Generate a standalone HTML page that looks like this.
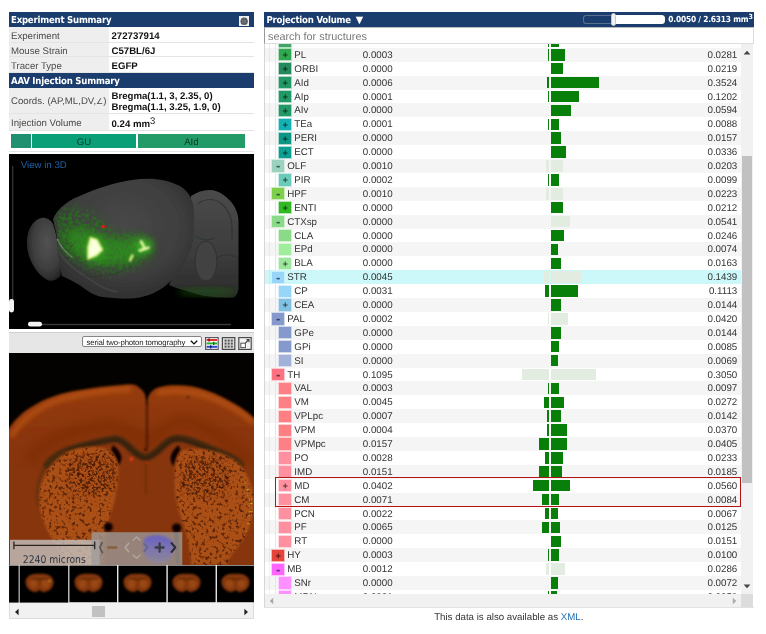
<!DOCTYPE html>
<html><head><meta charset="utf-8"><title>Projection Volume</title>
<style>
*{box-sizing:border-box;margin:0;padding:0}
html,body{width:766px;height:634px;background:#fff;overflow:hidden}
body{font-family:"Liberation Sans",Arial,sans-serif;font-size:9.65px;color:#333;position:relative;will-change:transform;text-rendering:geometricPrecision}
.abs{position:absolute}
.hd{position:absolute;background:#1a3d6d;color:#fff;font-family:"DejaVu Sans Condensed","DejaVu Sans",sans-serif;font-stretch:condensed;font-weight:bold;font-size:9.5px;letter-spacing:-0.2px;height:15.2px;line-height:17px;padding-left:2.5px;white-space:nowrap;overflow:hidden}
.lr{position:absolute;left:8.5px;width:245px;background:#fff;border-bottom:1px solid #e4e4e4}
.lr .k{position:absolute;left:0;top:0;bottom:0;width:100px;background:#eee;color:#4a4a4a;padding-left:2.5px;padding-top:2px}
.lr .v{position:absolute;left:103px;top:2px;font-weight:bold;color:#111;white-space:nowrap}
/* tree */
#tree{position:absolute;left:264px;top:44.4px;width:477.4px;height:549.9px;overflow:hidden;background:#fff}
.r{position:absolute;left:0;width:100%;height:13.9px;line-height:13.9px;white-space:nowrap}
.sq{position:absolute;top:1.4px;width:12.1px;height:11.2px;display:block;font-style:normal}
.gd{position:absolute;left:11.2px;top:0;width:1px;height:13.9px;background:#e6e6e6;display:block}
.pm{position:absolute;left:0;top:0;width:12.1px;height:11.2px;line-height:12.6px;text-align:center;font-size:9.4px;color:rgba(0,0,0,.68);font-weight:bold}
.mn{font-weight:bold;font-size:13px;line-height:11.6px;color:rgba(10,30,50,.7)}
.nm{position:absolute;top:1px;color:#333;font-size:9.75px}
.v1{position:absolute;left:98.8px;top:1px;color:#333;font-size:9.75px}
.v2{position:absolute;right:4.1px;top:1px;color:#333;font-size:9.75px}
.bl{position:absolute;right:192.4px;top:1.2px;height:11.5px;display:block}
.br{position:absolute;left:287px;top:1.2px;height:11.5px;display:block}
.g{background:#087f08}
.f{background:#e2ece0}
</style></head><body>

<!-- LEFT PANEL -->
<div class="hd" style="left:8.5px;top:11.8px;width:245px">Experiment Summary</div>
<div class="abs" style="left:239.4px;top:15.7px;width:10.1px;height:10.1px;background:#f0f0f0"><svg class="abs" style="left:0;top:0" width="10.1" height="10.1" viewBox="0 0 20 20"><ellipse cx="10.2" cy="10.4" rx="7.2" ry="7.6" fill="#50545c"/><path d="M10.2 3.5v13.5M6.4 7q2.6 3.4 0 6.8M14 7q-2.6 3.4 0 6.8" stroke="#8a8e96" stroke-width="1.3" fill="none"/></svg></div>
<div class="lr" style="top:27px;height:15.6px;line-height:15.2px"><div class="k">Experiment</div><div class="v">272737914</div></div>
<div class="lr" style="top:42.6px;height:14.6px;line-height:14.4px"><div class="k">Mouse Strain</div><div class="v">C57BL/6J</div></div>
<div class="lr" style="top:57.2px;height:15.8px;line-height:15.4px"><div class="k">Tracer Type</div><div class="v">EGFP</div></div>
<div class="hd" style="left:8.5px;top:73px;width:245px">AAV Injection Summary</div>
<div class="lr" style="top:88.2px;height:25.6px;line-height:25px"><div class="k" style="padding-top:1px">Coords. (AP,ML,DV,<span style="font-size:8px">∠</span>)</div><div class="v" style="line-height:10.6px;top:4.2px">Bregma(1.1, 3, 2.35, 0)<br>Bregma(1.1, 3.25, 1.9, 0)</div></div>
<div class="lr" style="top:113.8px;height:17.2px;line-height:18px"><div class="k" style="padding-top:1px">Injection Volume</div><div class="v">0.24 mm<sup style="font-weight:normal;font-size:9.5px;line-height:0;vertical-align:3.4px">3</sup></div></div>
<div class="abs" style="left:8.5px;top:131px;width:245px;height:21px;background:#fff;border-bottom:1px solid #e4e4e4"></div>
<div class="abs" style="left:11.2px;top:133.8px;width:19.7px;height:14.6px;background:#1f9070"></div>
<div class="abs" style="left:31.6px;top:133.8px;width:104.8px;height:14.6px;background:#0b9f77;color:#033a2a;text-align:center;line-height:17px;overflow:hidden">GU</div>
<div class="abs" style="left:137.6px;top:133.8px;width:107.6px;height:14.6px;background:#239b68;color:#063a22;text-align:center;line-height:17px;overflow:hidden">AId</div>

<!-- 3D brain -->
<div class="abs" style="left:8.5px;top:154.3px;width:245px;height:174.3px;background:#000;overflow:hidden">
<svg class="abs" style="left:0;top:0" width="245" height="174.3" viewBox="0 0 245 174.3">
<defs>
<filter id="b1" x="-20%" y="-20%" width="140%" height="140%"><feGaussianBlur stdDeviation="1.2"/></filter>
<filter id="b3" x="-30%" y="-30%" width="160%" height="160%"><feGaussianBlur stdDeviation="3.5"/></filter>
<filter id="b6" x="-30%" y="-30%" width="160%" height="160%"><feGaussianBlur stdDeviation="6"/></filter>
<filter id="b05" x="-20%" y="-20%" width="140%" height="140%"><feGaussianBlur stdDeviation="0.7"/></filter>
<radialGradient id="cg" cx="0.5" cy="0.4" r="0.65"><stop offset="0" stop-color="#484848"/><stop offset="0.6" stop-color="#3f3f3f"/><stop offset="1" stop-color="#2c2c2c"/></radialGradient>
<radialGradient id="og" cx="0.6" cy="0.4" r="0.7"><stop offset="0" stop-color="#525252"/><stop offset="0.6" stop-color="#3e3e3e"/><stop offset="1" stop-color="#1c1c1c"/></radialGradient>
<linearGradient id="cbg" x1="0" y1="0" x2="0" y2="1"><stop offset="0" stop-color="#4a4a4a"/><stop offset="0.6" stop-color="#3c3c3c"/><stop offset="1" stop-color="#2a2a2a"/></linearGradient>
<clipPath id="cc"><path id="cer" d="M44 65 C50 52 62 45 73 41 C88 34 108 28 123 26 C140 23 158 25 171 32 C181 38 185 48 185 60 C186 80 184 95 179 102 C173 116 163 128 152 135 C143 141 132 144 122 144.5 C112 145 104 144 98 143.5 C90 143 82 140 76 135 C68 129 60 125 53 122 C50 112 49 98 48 84 C47 76 45 70 44 65Z"/></clipPath>
<filter id="gn2" color-interpolation-filters="sRGB" x="-20%" y="-20%" width="140%" height="140%"><feGaussianBlur in="SourceGraphic" stdDeviation="4" result="bl"/><feTurbulence type="fractalNoise" baseFrequency="0.3" numOctaves="3" seed="19" result="n"/><feColorMatrix in="n" type="matrix" values="0 0 0 0 0  0 0 0 0 0  0 0 0 0 0  2.6 0 0 0 -0.95" result="na"/><feComposite in="bl" in2="na" operator="in"/></filter>
<filter id="gn" color-interpolation-filters="sRGB" x="-20%" y="-20%" width="140%" height="140%"><feGaussianBlur in="SourceGraphic" stdDeviation="5" result="bl"/><feTurbulence type="fractalNoise" baseFrequency="0.35" numOctaves="3" seed="7" result="n"/><feColorMatrix in="n" type="matrix" values="0 0 0 0 0  0 0 0 0 0  0 0 0 0 0  2.2 0 0 0 -0.45" result="na"/><feComposite in="bl" in2="na" operator="in"/></filter>
</defs>
<g filter="url(#b05)">
<!-- cerebellum + brainstem -->
<path d="M182 42 C188 38 194 36 200 36 C206 36 210 38 213 40 C219 44 225 50 227 56 C229 60 229.5 64 229.5 70 L229.5 134 C229 139 227 143 224 143.6 C216 144 208 143.5 202 142.8 C192 141.5 184 139 178 137 C170 135 164 133 160 131 L175 100Z" fill="url(#cbg)"/>
<path d="M189 50 C196 44 206 44 213 50 C220 56 223 64 223 74 L223 86" fill="none" stroke="#353535" stroke-width="1.2"/>
<ellipse cx="197" cy="107" rx="11" ry="20" fill="#424242" stroke="#303030" stroke-width="1"/>
<path d="M208 104 C214 100 222 100 229 104" fill="none" stroke="#303030" stroke-width="1"/>
<path d="M186 82 C192 86 200 87 206 84" fill="none" stroke="#2e3a2e" stroke-width="1.2"/>
<!-- olfactory bulb -->
<path d="M32 64 C37 63 42 66 44 70 C47 78 49 90 50 100 C51 110 52 118 51.5 122 C48 126 43 127.5 40 126.5 C32 124 24 114 20 102 C17 92 17 82 21 74 C24 68 28 65 32 64Z" fill="url(#og)"/>
<!-- cerebrum -->
<use href="#cer" fill="url(#cg)"/>
<path d="M50 98 C56 108 66 116 76 122 C86 130 96 136 108 138" fill="none" stroke="#555" stroke-width="1.6" opacity=".45"/>
<path d="M48.5 85 C51 92 56 98 63.5 103.5" fill="none" stroke="#9a9a9a" stroke-width="1.5" opacity=".85"/>
<path d="M76 122 C92 124 110 120 124 112" fill="none" stroke="#333" stroke-width="1.2" opacity=".7"/>
</g>
<!-- green signal -->
<g clip-path="url(#cc)">
<g filter="url(#gn2)">
<path d="M45 60 C52 51 62 52 72 55 C82 58 93 63 98 71 C100 77 105 79 113 79 C125 78 136 80 144 87 C148 94 144 103 136 107 C128 113 114 119 100 119 C88 119 78 114 68 108 C58 104 50 96 47 86 C44 78 44 68 45 60Z" fill="#247417"/>
</g>
<g filter="url(#gn)">
<path d="M52 76 C60 70 72 72 82 76 C92 80 100 84 112 84 C124 82 136 82 142 88 C146 96 140 104 130 106 C118 112 104 114 92 112 C78 110 66 104 58 96 C52 90 50 82 52 76Z" fill="#287e18"/>
</g>
<g filter="url(#b3)">
<path d="M62 80 C70 74 82 76 92 82 C100 88 112 88 122 86 C130 82 140 84 142 92 C142 100 132 104 122 106 C108 110 94 110 84 108 C72 104 62 94 62 80Z" fill="#2f9420" opacity=".5"/>
<ellipse cx="135" cy="92" rx="8" ry="7" fill="#40c422" opacity=".62"/>
<ellipse cx="86" cy="95" rx="9" ry="11" fill="#40c422" opacity=".5"/>
</g>
</g>
<g filter="url(#b3)"><ellipse cx="198" cy="138" rx="30" ry="3.5" fill="#1a5a12" opacity=".7"/></g>
<g filter="url(#b1)">
<path d="M81.4 83.5 L88 85.5 L93.6 95.8 L87.3 101.7 L78.9 105.3 L78.9 93Z" fill="#faffdc" stroke="#d2f060" stroke-width="1.4"/>
<path d="M132 87.3 L134.9 92.6 M130.8 96.6 L139.4 93.7" fill="none" stroke="#f2ffae" stroke-width="2.6" stroke-linecap="round"/>
<path d="M123.4 101.4 L121 106.4" fill="none" stroke="#e8ff80" stroke-width="2.4" stroke-linecap="round"/>
</g>
<circle cx="94.2" cy="72.6" r="1.7" fill="#f01414" filter="url(#b05)"/><rect x="95" y="72.2" width="4" height="0.9" fill="#c01010" opacity=".8"/>
<!-- sliders -->
<rect x="3" y="12" width="1.3" height="146" fill="#333"/>
<rect x="0" y="145" width="5" height="13.5" rx="2.4" fill="#f2f2f2"/>
<rect x="30" y="169.8" width="192" height="1.4" fill="#3a3a3a"/>
<rect x="19" y="167.8" width="14" height="4.8" rx="2.4" fill="#f4f4f4"/>
</svg>

<div class="abs" style="left:12.2px;top:5.5px;color:#1b62a5;font-size:9.7px">View in 3D</div>
</div>

<!-- section viewer -->
<div class="abs" style="left:8.5px;top:332.3px;width:245px;height:20.6px;background:#e6e6e6;border-top:1px solid #d0d0d0"></div>
<div class="abs" style="left:82.3px;top:336.4px;width:119.3px;height:11px;background:#fff;border:1px solid #858585;border-radius:2px;font-size:7.8px;letter-spacing:-0.14px;line-height:11.6px;padding-left:3.2px;color:#1a1a1a;white-space:nowrap">serial two-photon tomography<svg class="abs" style="right:2.2px;top:2.6px" width="8" height="5" viewBox="0 0 8 5"><path d="M.8.8L4 3.9 7.2.8" fill="none" stroke="#111" stroke-width="1.4"/></svg></div>
<svg class="abs" style="left:204.6px;top:336.8px" width="47" height="13" viewBox="0 0 47 13">
<rect x="0.6" y="0.6" width="12.6" height="11.8" fill="#fff" stroke="#5a5a66" stroke-width="1.2"/>
<rect x="1.6" y="2" width="10.6" height="2" fill="#e03030"/><rect x="1.6" y="5.4" width="10.6" height="2" fill="#28b030"/><rect x="1.6" y="8.8" width="10.6" height="2" fill="#2848d0"/>
<rect x="3.4" y="1.4" width="1.4" height="3.2" fill="#8a1010"/><rect x="8" y="4.8" width="1.4" height="3.2" fill="#0a6a10"/><rect x="5" y="8.2" width="1.4" height="3.2" fill="#102080"/>
<rect x="17.4" y="0.6" width="12.4" height="11.8" fill="#dcdcdc" stroke="#4a4a4a" stroke-width="1.2"/>
<g fill="#555"><rect x="19.6" y="2.6" width="2" height="2"/><rect x="22.7" y="2.6" width="2" height="2"/><rect x="25.8" y="2.6" width="2" height="2"/><rect x="19.6" y="5.6" width="2" height="2"/><rect x="22.7" y="5.6" width="2" height="2"/><rect x="25.8" y="5.6" width="2" height="2"/><rect x="19.6" y="8.6" width="2" height="2"/><rect x="22.7" y="8.6" width="2" height="2"/><rect x="25.8" y="8.6" width="2" height="2"/></g>
<rect x="33.8" y="0.6" width="12.4" height="11.8" fill="#f4f4f4" stroke="#4a4a4a" stroke-width="1.2"/>
<rect x="35.8" y="6.2" width="4.6" height="4.4" fill="#fff" stroke="#555" stroke-width="1"/>
<path d="M40.4 6 L43.8 2.8 M41.4 2.6 L44 2.6 L44 5.2" stroke="#444" stroke-width="1.1" fill="none"/>
</svg>

<div class="abs" style="left:8.5px;top:352.9px;width:245px;height:212px;background:#000;overflow:hidden">
<svg class="abs" style="left:0;top:0" width="245" height="212" viewBox="0 0 245 212">
<defs>
<filter id="s1" x="-10%" y="-10%" width="120%" height="120%"><feGaussianBlur stdDeviation="0.8"/></filter>
<filter id="s05" x="-5%" y="-5%" width="110%" height="110%"><feGaussianBlur stdDeviation="0.45"/></filter>
<filter id="s2" x="-20%" y="-20%" width="140%" height="140%"><feGaussianBlur stdDeviation="2.2"/></filter>
<filter id="s4" x="-20%" y="-20%" width="140%" height="140%"><feGaussianBlur stdDeviation="4.5"/></filter>
<filter id="spk" color-interpolation-filters="sRGB" x="0" y="0" width="100%" height="100%"><feTurbulence type="fractalNoise" baseFrequency="0.3" numOctaves="2" seed="3" result="n"/><feColorMatrix in="n" type="matrix" values="0 0 0 0 0.2  0 0 0 0 0.05  0 0 0 0 0  6 0 0 0 -3.25" result="na"/><feComposite in="na" in2="SourceGraphic" operator="in"/></filter>
<filter id="spk2" color-interpolation-filters="sRGB" x="0" y="0" width="100%" height="100%"><feTurbulence type="fractalNoise" baseFrequency="0.38" numOctaves="2" seed="21" result="n"/><feColorMatrix in="n" type="matrix" values="0 0 0 0 0.16  0 0 0 0 0.04  0 0 0 0 0  6 0 0 0 -2.9" result="na"/><feGaussianBlur in="SourceGraphic" stdDeviation="5" result="m"/><feComposite in="na" in2="m" operator="in"/></filter>
<filter id="grn" color-interpolation-filters="sRGB" x="0" y="0" width="100%" height="100%"><feTurbulence type="fractalNoise" baseFrequency="0.5" numOctaves="2" seed="11" result="n"/><feColorMatrix in="n" type="matrix" values="0 0 0 0 0.75  0 0 0 0 0.72  0 0 0 0 0.1  3 0 0 0 -1.5" result="na"/><feComposite in="na" in2="SourceGraphic" operator="in"/></filter>
<linearGradient id="tg" x1="0" y1="0" x2="0" y2="1"><stop offset="0" stop-color="#963c09"/><stop offset="0.35" stop-color="#883407"/><stop offset="1" stop-color="#863407"/></linearGradient>
<path id="lst" d="M73 94.5 C84 93 96 94 101 98 C108 104 110.5 112 109.5 122 C108.5 140 104 156 99 169 C96 180 95 196 96 212 L58 212 C54 200 48 192 42 184 C34 172 29 156 30.5 140 C32 124 42 108 58 99 C63 96.5 68 95 73 94.5Z"/>
<path id="rst" d="M172 98 C180 95 192 95 202 97.5 C212 100 222 104 229 110 C237 117 242.5 128 244.5 142 C245.5 156 243 170 237 182 C231 192 224 200 220 206 L218 212 L182 212 C181 200 179 188 176 176 C170 162 165.5 146 165.5 130 C165.5 116 167 104 172 98Z"/>
<linearGradient id="blg" x1="0" y1="0" x2="0" y2="1"><stop offset="0" stop-color="#4a4af0"/><stop offset="0.45" stop-color="#6a6ad8"/><stop offset="1" stop-color="#8a8aa8"/></linearGradient>
</defs>
<rect width="245" height="212" fill="#030201"/>
<g filter="url(#s1)">
<path id="tis" d="M-2 214 L-2 78 C2 72 6 67 9.7 63.8 C14 59 19 56 23.3 53.6 C29 50 35 47 40.4 45.1 C47 42.5 54 40.5 60.8 39.1 C68 37.5 75 36.5 81.3 35.7 C88 34.6 95 33.8 101.7 33.2 C109 32.4 116 31.8 122.5 31.5 C126 31.6 128 32.6 129.3 34 C132 36 134 38 135.3 40 C136.5 42 137 46 137.3 52 L138.3 52 C138.3 48 138.6 45 139.5 43.4 C141 40 143 37.5 146.4 35.7 C152 33.4 158 32.6 163.4 32.3 C170 32 176 32.4 182.1 33.2 C188 34.3 194 36 199.2 38.3 C206 40.6 212 43.5 217.9 46.8 C224 50 230 53.5 235 57 C239 60 243 63 247 67 L247 214Z" fill="url(#tg)"/>
</g>
<!-- cortex inner shading -->
<g filter="url(#s4)" opacity=".55">
<path d="M20 110 C30 90 60 76 100 72 C112 72 124 80 137 90 C150 78 166 66 176 68 C196 70 222 88 240 112" fill="none" stroke="#7a2c04" stroke-width="14"/>
</g>
<!-- bright outer rim -->
<g filter="url(#s2)" opacity=".6">
<path d="M2 84 C12 66 30 54 52 46 C74 40 100 37 122 36" fill="none" stroke="#c25a14" stroke-width="6"/>
<path d="M148 40 C166 36 190 38 210 48 C224 54 236 62 245 70" fill="none" stroke="#c25a14" stroke-width="6"/>
</g>
<!-- corpus callosum / external capsule -->
<g filter="url(#s1)" fill="none" stroke-linecap="round" stroke-linejoin="round">
<path d="M30 152 C27 136 30 122 38 112" stroke="#5a300e" stroke-width="3.2" opacity=".75"/>
<path d="M231 112 C238 122 242 136 243 150" stroke="#5a300e" stroke-width="3" opacity=".6"/>
<path d="M38 112 C44 104 54 98.5 66 95 C80 91 94 87.5 106 86 C111 86 115 89 119 93 C125 99 130 103.5 136.5 104.5 C143 103.5 148 99 154 93 C158 89 162 86 167 85.5 C174 85 182 87.5 190 91 C200 95.5 210 99 219 103 C224 105.5 228 108 231 112" stroke="#4a2a10" stroke-width="7.6"/>
<path d="M60 97 C76 92 94 88 106 86.5 C111 86.5 115 89.5 119 93.5 C125 99.5 130 104 136.5 105 C143 104 148 99.5 154 93.5 C158 89.5 162 86.5 167 86 C176 86 190 91.5 206 98" stroke="#33200e" stroke-width="3.4" opacity=".8"/>
</g>
<g filter="url(#s1)">
<path d="M104 92 C108 95 111.5 99 112.5 104 C112.5 108 111 111 109 112 C107.5 106 105.5 101 102 97Z" fill="#0e0602"/>
<path d="M169.5 92 C166 95 162.5 99 161.5 104 C161.5 108 162.5 111.5 164.5 113 C166 107 168 102 171.5 97Z" fill="#0e0602"/>
<circle cx="136.6" cy="96.5" r="1.3" fill="#1a0a02"/>
</g>
<!-- striatum -->
<g filter="url(#s1)"><use href="#lst" fill="#aa4f16"/><use href="#rst" fill="#aa4f16"/></g>
<g opacity=".6" filter="url(#s05)"><use href="#lst" filter="url(#spk)"/><use href="#rst" filter="url(#spk)"/></g>
<g opacity=".65" filter="url(#s05)"><ellipse cx="82" cy="122" rx="26" ry="22" fill="#fff" filter="url(#spk2)"/><ellipse cx="196" cy="124" rx="26" ry="22" fill="#fff" filter="url(#spk2)"/></g>
<path d="M232 126 C238 128 243 138 244 152 C244 164 241 174 236 182 C240 168 241 152 238 140Z" filter="url(#grn)" fill="#fff"/>
<!-- fissure + septum -->
<g filter="url(#s1)">
<path d="M137.8 50 L137.8 96" stroke="#3a1604" stroke-width="1.6" fill="none"/>
<path d="M137 108 L137 142" stroke="#6a2a06" stroke-width="2.4" fill="none" opacity=".7"/>
<circle cx="99.2" cy="174" r="4.6" fill="#0a0502"/>
<circle cx="167.6" cy="175" r="4.6" fill="#0a0502"/>
<path d="M167 180 L169 212" stroke="#1a0a02" stroke-width="3" opacity=".8"/>
<circle cx="122.4" cy="106" r="1.7" fill="#ff3a24"/>
<circle cx="137.8" cy="109.5" r="0.9" fill="#d83020"/>
<circle cx="179" cy="44" r="1.1" fill="#2a0c02"/>
</g>
<!-- overlays -->
<rect x="1" y="186.8" width="89.6" height="25.2" fill="#c6c6c6" opacity=".78"/>
<rect x="82.5" y="179.2" width="90.8" height="32.8" fill="#9c9c9c" opacity=".76"/>
<path d="M136 185 C144 180 158 182 163 188 C167 194 164 204 158 209 C150 212 140 210 137 204 C134 198 133 190 136 185Z" fill="url(#blg)" opacity=".6" filter="url(#s1)"/>
<path d="M4.6 192.3 L86 192.3 M4.9 188.6 L4.9 196.2 M85.7 188.6 L85.7 196.2" stroke="#2a2420" stroke-width="1.3" fill="none"/>
<text x="13.8" y="210.3" font-family="'DejaVu Sans Condensed','DejaVu Sans',sans-serif" font-stretch="condensed" font-size="10.6" fill="#2c3444" textLength="63" lengthAdjust="spacingAndGlyphs">2240 microns</text>
<g fill="none" stroke-linecap="round" stroke-linejoin="round">
<path d="M93.2 189.6 L90.8 194.5 L93.2 199.4" stroke="#5c5652" stroke-width="1.7"/>
<path d="M99.4 194.5 L107 194.5" stroke="#86603a" stroke-width="2.5"/>
<path d="M119.6 190.4 L116.2 194.5 L119.6 198.6" stroke="#b4a8a0" stroke-width="1.6"/>
<path d="M124 187.2 L127.6 184 L131.2 187.2" stroke="#b0a8a4" stroke-width="1.2"/>
<path d="M124 202 L127.6 205.2 L131.2 202" stroke="#b0a8a4" stroke-width="1.2"/>
<path d="M135 190.5 L138.6 194.5 L135 198.5" stroke="#66667a" stroke-width="1.4"/>
<path d="M146.6 194.5 L154.6 194.5 M150.6 190.3 L150.6 198.7" stroke="#3c3c44" stroke-width="2.3"/>
<path d="M162.5 190 L166.3 194.5 L162.5 199" stroke="#2c2c38" stroke-width="2"/>
</g>
</svg>

</div>
<div class="abs" style="left:8.5px;top:564.9px;width:245px;height:38.2px;background:#e8e8e8;overflow:hidden">
<svg class="abs" style="left:0;top:0" width="245" height="38.2" viewBox="0 0 245 38.2">
<defs><filter id="tb" x="-20%" y="-20%" width="140%" height="140%"><feGaussianBlur stdDeviation="0.9"/></filter>
<g id="tbr"><path d="M-14 0 C-14 -6 -8 -9 -1 -8.4 C0 -8 0 -8 1 -8.4 C8 -9 14 -6 14 0 C14 5 10 9.5 4 9.8 C2 9.6 1 8.4 0 7.6 C-1 8.4 -2 9.6 -4 9.8 C-10 9.5 -14 5 -14 -1Z" fill="#86380a" filter="url(#tb)"/><ellipse cx="-6" cy="1.5" rx="4" ry="4.6" fill="#a8541a" opacity=".55" filter="url(#tb)"/><ellipse cx="6" cy="1.5" rx="4" ry="4.6" fill="#a8541a" opacity=".55" filter="url(#tb)"/><path d="M-8 -3 C-4 -5 -2 -3 0 -2 C2 -3 4 -5 8 -3" stroke="#4a2408" stroke-width="1.3" fill="none" opacity=".7" filter="url(#tb)"/></g></defs>
<rect x="0" y="0.6" width="9.6" height="37" fill="#000"/>
<rect x="10.6" y="0.6" width="48.6" height="37" fill="#000"/>
<rect x="60.4" y="0.6" width="47.6" height="36.6" fill="#000"/>
<rect x="109.4" y="0.6" width="48" height="36.6" fill="#000"/>
<rect x="158.8" y="0.6" width="47.8" height="36.6" fill="#000"/>
<rect x="208" y="0.6" width="37" height="36.6" fill="#000"/>
<use href="#tbr" x="30.5" y="17.2"/><circle cx="40.6" cy="16" r="1.2" fill="#c8b020" opacity=".8" filter="url(#tb)"/>
<use href="#tbr" x="79.5" y="17.2"/><circle cx="90" cy="16" r="1" fill="#b89820" opacity=".6" filter="url(#tb)"/>
<use href="#tbr" x="128.5" y="17.2"/>
<use href="#tbr" x="177.5" y="17.2"/>
<use href="#tbr" x="226.5" y="17.2"/>
</svg>
</div>
<div class="abs" style="left:8.5px;top:603.1px;width:245px;height:15.6px;background:#f1f1f1;border:1px solid #dcdcdc;border-top:none"></div>
<div class="abs" style="left:91.7px;top:606.3px;width:13.6px;height:10.4px;background:#c1c1c1"></div>
<svg class="abs" style="left:13.5px;top:607.5px" width="6" height="8" viewBox="0 0 6 8"><path d="M4.6 .8 L4.6 7.2 L1 4Z" fill="#222"/></svg>
<svg class="abs" style="left:243.2px;top:607.5px" width="6" height="8" viewBox="0 0 6 8"><path d="M1.4 .8 L1.4 7.2 L5 4Z" fill="#222"/></svg>


<!-- RIGHT PANEL -->
<div class="hd" style="left:264px;top:11.8px;width:489.5px">Projection Volume <span style="font-family:'DejaVu Sans',sans-serif;font-stretch:normal;font-size:9.6px;letter-spacing:0;margin-left:2.2px">▼</span></div>
<div class="abs" style="left:583px;top:14.8px;width:31px;height:9.4px;border:1px solid #5a6f8e;border-right:none;border-radius:3px 0 0 3px;background:#1a3d6d"></div>
<div class="abs" style="left:613px;top:14.8px;width:52.4px;height:9.4px;background:#fff;border-radius:0 3.5px 3.5px 0"></div>
<div class="abs" style="left:610.6px;top:13px;width:5.4px;height:13px;background:#f4f4f4;border:1px solid #c8c8c8;border-radius:2.6px"></div>
<div class="abs" style="left:560px;top:11.8px;width:192.6px;height:15.2px;line-height:15px;text-align:right;color:#fff;font-family:'DejaVu Sans Condensed','DejaVu Sans',sans-serif;font-stretch:condensed;font-weight:bold;font-size:8.3px;letter-spacing:-0.2px;white-space:nowrap">0.0050 / 2.6313 mm<sup style="font-size:7px;line-height:0;vertical-align:3.2px">3</sup></div>

<div class="abs" style="left:264px;top:27px;width:489.5px;height:17px;border:1px solid #dedede;border-top-color:#bbb;border-left-color:#999;background:#fff;font-size:10.85px;line-height:19px;overflow:hidden;color:#787878;padding-left:3px">search for structures</div>
<div class="abs" style="left:264px;top:44px;width:489.5px;height:563.4px;background:#fff;border-left:1px solid #ddd"></div>
<div id="tree">
<div class="r" style="top:-10.4px;background:#fff"><i class="gd"></i><i class="sq" style="left:15.2px;background:#40a666;box-shadow:0 0 0 .8px #a9d6ba"><b class="pm">+</b></i><span class="nm" style="left:30.3px">ACA</span><span class="v1">0.0002</span><i class="bl g" style="width:1.2px"></i><i class="br g" style="width:7.9px"></i><span class="v2">0.0094</span></div>
<div class="r" style="top:3.5px;background:#f5f5f5"><i class="gd"></i><i class="sq" style="left:15.2px;background:#2fa850;box-shadow:0 0 0 .8px #a1d7b0"><b class="pm">+</b></i><span class="nm" style="left:30.3px">PL</span><span class="v1">0.0003</span><i class="bl g" style="width:1.4px"></i><i class="br g" style="width:13.7px"></i><span class="v2">0.0281</span></div>
<div class="r" style="top:17.4px;background:#fff"><i class="gd"></i><i class="sq" style="left:15.2px;background:#248a5e;box-shadow:0 0 0 .8px #9ccab6"><b class="pm">+</b></i><span class="nm" style="left:30.3px">ORBI</span><span class="v1">0.0000</span><i class="bl g" style="width:0.0px"></i><i class="br g" style="width:12.1px"></i><span class="v2">0.0219</span></div>
<div class="r" style="top:31.3px;background:#f5f5f5"><i class="gd"></i><i class="sq" style="left:15.2px;background:#219866;box-shadow:0 0 0 .8px #9bd0ba"><b class="pm">+</b></i><span class="nm" style="left:30.3px">AId</span><span class="v1">0.0006</span><i class="bl g" style="width:2.0px"></i><i class="br g" style="width:48.4px"></i><span class="v2">0.3524</span></div>
<div class="r" style="top:45.2px;background:#fff"><i class="gd"></i><i class="sq" style="left:15.2px;background:#219866;box-shadow:0 0 0 .8px #9bd0ba"><b class="pm">+</b></i><span class="nm" style="left:30.3px">AIp</span><span class="v1">0.0001</span><i class="bl g" style="width:0.8px"></i><i class="br g" style="width:28.3px"></i><span class="v2">0.1202</span></div>
<div class="r" style="top:59.1px;background:#f5f5f5"><i class="gd"></i><i class="sq" style="left:15.2px;background:#219866;box-shadow:0 0 0 .8px #9bd0ba"><b class="pm">+</b></i><span class="nm" style="left:30.3px">AIv</span><span class="v1">0.0000</span><i class="bl g" style="width:0.0px"></i><i class="br g" style="width:19.9px"></i><span class="v2">0.0594</span></div>
<div class="r" style="top:73.0px;background:#fff"><i class="gd"></i><i class="sq" style="left:15.2px;background:#15b0b3;box-shadow:0 0 0 .8px #95dbdc"><b class="pm">+</b></i><span class="nm" style="left:30.3px">TEa</span><span class="v1">0.0001</span><i class="bl g" style="width:0.8px"></i><i class="br g" style="width:7.6px"></i><span class="v2">0.0088</span></div>
<div class="r" style="top:86.9px;background:#f5f5f5"><i class="gd"></i><i class="sq" style="left:15.2px;background:#0e9684;box-shadow:0 0 0 .8px #92cfc7"><b class="pm">+</b></i><span class="nm" style="left:30.3px">PERI</span><span class="v1">0.0000</span><i class="bl g" style="width:0.0px"></i><i class="br g" style="width:10.2px"></i><span class="v2">0.0157</span></div>
<div class="r" style="top:100.8px;background:#fff"><i class="gd"></i><i class="sq" style="left:15.2px;background:#0d9f91;box-shadow:0 0 0 .8px #92d3cd"><b class="pm">+</b></i><span class="nm" style="left:30.3px">ECT</span><span class="v1">0.0000</span><i class="bl g" style="width:0.0px"></i><i class="br g" style="width:14.9px"></i><span class="v2">0.0336</span></div>
<div class="r" style="top:114.7px;background:#f5f5f5"><i class="sq" style="left:8.1px;background:#9ad2bd;box-shadow:0 0 0 .8px #d1eae1"><b class="pm mn">-</b></i><span class="nm" style="left:23.2px">OLF</span><span class="v1">0.0010</span><i class="bl f" style="width:2.6px"></i><i class="br f" style="width:11.6px"></i><span class="v2">0.0203</span></div>
<div class="r" style="top:128.6px;background:#fff"><i class="gd"></i><i class="sq" style="left:15.2px;background:#6acbba;box-shadow:0 0 0 .8px #bbe7df"><b class="pm">+</b></i><span class="nm" style="left:30.3px">PIR</span><span class="v1">0.0002</span><i class="bl g" style="width:1.2px"></i><i class="br g" style="width:8.1px"></i><span class="v2">0.0099</span></div>
<div class="r" style="top:142.5px;background:#f5f5f5"><i class="sq" style="left:8.1px;background:#7ed04b;box-shadow:0 0 0 .8px #c4e9ae"><b class="pm mn">-</b></i><span class="nm" style="left:23.2px">HPF</span><span class="v1">0.0010</span><i class="bl f" style="width:2.6px"></i><i class="br f" style="width:12.2px"></i><span class="v2">0.0223</span></div>
<div class="r" style="top:156.4px;background:#fff"><i class="gd"></i><i class="sq" style="left:15.2px;background:#32b825;box-shadow:0 0 0 .8px #a2df9c"><b class="pm">+</b></i><span class="nm" style="left:30.3px">ENTI</span><span class="v1">0.0000</span><i class="bl g" style="width:0.0px"></i><i class="br g" style="width:11.9px"></i><span class="v2">0.0212</span></div>
<div class="r" style="top:170.3px;background:#f5f5f5"><i class="sq" style="left:8.1px;background:#8ada87;box-shadow:0 0 0 .8px #caeec9"><b class="pm mn">-</b></i><span class="nm" style="left:23.2px">CTXsp</span><span class="v1">0.0000</span><i class="bl f" style="width:0.0px"></i><i class="br f" style="width:19.0px"></i><span class="v2">0.0541</span></div>
<div class="r" style="top:184.2px;background:#fff"><i class="gd"></i><i class="sq" style="left:15.2px;background:#8ada87;box-shadow:0 0 0 .8px #caeec9"></i><span class="nm" style="left:30.3px">CLA</span><span class="v1">0.0000</span><i class="bl g" style="width:0.0px"></i><i class="br g" style="width:12.8px"></i><span class="v2">0.0246</span></div>
<div class="r" style="top:198.1px;background:#f5f5f5"><i class="gd"></i><i class="sq" style="left:15.2px;background:#a0ee9d;box-shadow:0 0 0 .8px #d4f7d2"></i><span class="nm" style="left:30.3px">EPd</span><span class="v1">0.0000</span><i class="bl g" style="width:0.0px"></i><i class="br g" style="width:7.0px"></i><span class="v2">0.0074</span></div>
<div class="r" style="top:212.0px;background:#fff"><i class="gd"></i><i class="sq" style="left:15.2px;background:#9de79c;box-shadow:0 0 0 .8px #d2f4d2"><b class="pm">+</b></i><span class="nm" style="left:30.3px">BLA</span><span class="v1">0.0000</span><i class="bl g" style="width:0.0px"></i><i class="br g" style="width:10.4px"></i><span class="v2">0.0163</span></div>
<div class="r" style="top:225.9px;background:#ccf8fa"><i class="sq" style="left:8.1px;background:#98d6f9;box-shadow:0 0 0 .8px #d0ecfc"><b class="pm mn">-</b></i><span class="nm" style="left:23.2px">STR</span><span class="v1">0.0045</span><i class="bl f" style="width:5.5px"></i><i class="br f" style="width:30.9px"></i><span class="v2">0.1439</span></div>
<div class="r" style="top:239.8px;background:#fff"><i class="gd"></i><i class="sq" style="left:15.2px;background:#98d6f9;box-shadow:0 0 0 .8px #d0ecfc"></i><span class="nm" style="left:30.3px">CP</span><span class="v1">0.0031</span><i class="bl g" style="width:4.5px"></i><i class="br g" style="width:27.2px"></i><span class="v2">0.1113</span></div>
<div class="r" style="top:253.7px;background:#f5f5f5"><i class="gd"></i><i class="sq" style="left:15.2px;background:#80c0e2;box-shadow:0 0 0 .8px #c5e2f1"><b class="pm">+</b></i><span class="nm" style="left:30.3px">CEA</span><span class="v1">0.0000</span><i class="bl g" style="width:0.0px"></i><i class="br g" style="width:9.8px"></i><span class="v2">0.0144</span></div>
<div class="r" style="top:267.6px;background:#fff"><i class="sq" style="left:8.1px;background:#8599cc;box-shadow:0 0 0 .8px #c8d1e8"><b class="pm mn">-</b></i><span class="nm" style="left:23.2px">PAL</span><span class="v1">0.0002</span><i class="bl f" style="width:1.2px"></i><i class="br f" style="width:16.7px"></i><span class="v2">0.0420</span></div>
<div class="r" style="top:281.5px;background:#f5f5f5"><i class="gd"></i><i class="sq" style="left:15.2px;background:#8599cc;box-shadow:0 0 0 .8px #c8d1e8"></i><span class="nm" style="left:30.3px">GPe</span><span class="v1">0.0000</span><i class="bl g" style="width:0.0px"></i><i class="br g" style="width:9.8px"></i><span class="v2">0.0144</span></div>
<div class="r" style="top:295.4px;background:#fff"><i class="gd"></i><i class="sq" style="left:15.2px;background:#8599cc;box-shadow:0 0 0 .8px #c8d1e8"></i><span class="nm" style="left:30.3px">GPi</span><span class="v1">0.0000</span><i class="bl g" style="width:0.0px"></i><i class="br g" style="width:7.5px"></i><span class="v2">0.0085</span></div>
<div class="r" style="top:309.3px;background:#f5f5f5"><i class="gd"></i><i class="sq" style="left:15.2px;background:#a2b1d8;box-shadow:0 0 0 .8px #d5dbed"></i><span class="nm" style="left:30.3px">SI</span><span class="v1">0.0000</span><i class="bl g" style="width:0.0px"></i><i class="br g" style="width:6.8px"></i><span class="v2">0.0069</span></div>
<div class="r" style="top:323.2px;background:#fff"><i class="sq" style="left:8.1px;background:#ff7080;box-shadow:0 0 0 .8px #ffbec5"><b class="pm mn">-</b></i><span class="nm" style="left:23.2px">TH</span><span class="v1">0.1095</span><i class="bl f" style="width:27.0px"></i><i class="br f" style="width:45.0px"></i><span class="v2">0.3050</span></div>
<div class="r" style="top:337.1px;background:#f5f5f5"><i class="gd"></i><i class="sq" style="left:15.2px;background:#ff8084;box-shadow:0 0 0 .8px #ffc5c7"></i><span class="nm" style="left:30.3px">VAL</span><span class="v1">0.0003</span><i class="bl g" style="width:1.4px"></i><i class="br g" style="width:8.0px"></i><span class="v2">0.0097</span></div>
<div class="r" style="top:351.0px;background:#fff"><i class="gd"></i><i class="sq" style="left:15.2px;background:#ff8084;box-shadow:0 0 0 .8px #ffc5c7"></i><span class="nm" style="left:30.3px">VM</span><span class="v1">0.0045</span><i class="bl g" style="width:5.5px"></i><i class="br g" style="width:13.4px"></i><span class="v2">0.0272</span></div>
<div class="r" style="top:364.9px;background:#f5f5f5"><i class="gd"></i><i class="sq" style="left:15.2px;background:#ff8084;box-shadow:0 0 0 .8px #ffc5c7"></i><span class="nm" style="left:30.3px">VPLpc</span><span class="v1">0.0007</span><i class="bl g" style="width:2.2px"></i><i class="br g" style="width:9.7px"></i><span class="v2">0.0142</span></div>
<div class="r" style="top:378.8px;background:#fff"><i class="gd"></i><i class="sq" style="left:15.2px;background:#ff8084;box-shadow:0 0 0 .8px #ffc5c7"></i><span class="nm" style="left:30.3px">VPM</span><span class="v1">0.0004</span><i class="bl g" style="width:1.6px"></i><i class="br g" style="width:15.7px"></i><span class="v2">0.0370</span></div>
<div class="r" style="top:392.7px;background:#f5f5f5"><i class="gd"></i><i class="sq" style="left:15.2px;background:#ff8084;box-shadow:0 0 0 .8px #ffc5c7"></i><span class="nm" style="left:30.3px">VPMpc</span><span class="v1">0.0157</span><i class="bl g" style="width:10.2px"></i><i class="br g" style="width:16.4px"></i><span class="v2">0.0405</span></div>
<div class="r" style="top:406.6px;background:#fff"><i class="gd"></i><i class="sq" style="left:15.2px;background:#ff909f;box-shadow:0 0 0 .8px #ffcdd3"></i><span class="nm" style="left:30.3px">PO</span><span class="v1">0.0028</span><i class="bl g" style="width:4.3px"></i><i class="br g" style="width:12.4px"></i><span class="v2">0.0233</span></div>
<div class="r" style="top:420.5px;background:#f5f5f5"><i class="gd"></i><i class="sq" style="left:15.2px;background:#ff909f;box-shadow:0 0 0 .8px #ffcdd3"></i><span class="nm" style="left:30.3px">IMD</span><span class="v1">0.0151</span><i class="bl g" style="width:10.0px"></i><i class="br g" style="width:11.1px"></i><span class="v2">0.0185</span></div>
<div class="r" style="top:434.4px;background:#fff"><i class="gd"></i><i class="sq" style="left:15.2px;background:#ff909f;box-shadow:0 0 0 .8px #ffcdd3"><b class="pm">+</b></i><span class="nm" style="left:30.3px">MD</span><span class="v1">0.0402</span><i class="bl g" style="width:16.3px"></i><i class="br g" style="width:19.3px"></i><span class="v2">0.0560</span></div>
<div class="r" style="top:448.3px;background:#f5f5f5"><i class="gd"></i><i class="sq" style="left:15.2px;background:#ff909f;box-shadow:0 0 0 .8px #ffcdd3"></i><span class="nm" style="left:30.3px">CM</span><span class="v1">0.0071</span><i class="bl g" style="width:6.9px"></i><i class="br g" style="width:7.5px"></i><span class="v2">0.0084</span></div>
<div class="r" style="top:462.2px;background:#fff"><i class="gd"></i><i class="sq" style="left:15.2px;background:#ff909f;box-shadow:0 0 0 .8px #ffcdd3"></i><span class="nm" style="left:30.3px">PCN</span><span class="v1">0.0022</span><i class="bl g" style="width:3.8px"></i><i class="br g" style="width:6.7px"></i><span class="v2">0.0067</span></div>
<div class="r" style="top:476.1px;background:#f5f5f5"><i class="gd"></i><i class="sq" style="left:15.2px;background:#ff909f;box-shadow:0 0 0 .8px #ffcdd3"></i><span class="nm" style="left:30.3px">PF</span><span class="v1">0.0065</span><i class="bl g" style="width:6.6px"></i><i class="br g" style="width:9.1px"></i><span class="v2">0.0125</span></div>
<div class="r" style="top:490.0px;background:#fff"><i class="gd"></i><i class="sq" style="left:15.2px;background:#ff909f;box-shadow:0 0 0 .8px #ffcdd3"></i><span class="nm" style="left:30.3px">RT</span><span class="v1">0.0000</span><i class="bl g" style="width:0.0px"></i><i class="br g" style="width:10.0px"></i><span class="v2">0.0151</span></div>
<div class="r" style="top:503.9px;background:#f5f5f5"><i class="sq" style="left:8.1px;background:#e64438;box-shadow:0 0 0 .8px #f3aaa5"><b class="pm">+</b></i><span class="nm" style="left:23.2px">HY</span><span class="v1">0.0003</span><i class="bl g" style="width:1.4px"></i><i class="br g" style="width:8.2px"></i><span class="v2">0.0100</span></div>
<div class="r" style="top:517.8px;background:#fff"><i class="sq" style="left:8.1px;background:#ff64ff;box-shadow:0 0 0 .8px #ffb9ff"><b class="pm mn">-</b></i><span class="nm" style="left:23.2px">MB</span><span class="v1">0.0012</span><i class="bl f" style="width:2.8px"></i><i class="br f" style="width:13.8px"></i><span class="v2">0.0286</span></div>
<div class="r" style="top:531.7px;background:#f5f5f5"><i class="gd"></i><i class="sq" style="left:15.2px;background:#ff90ff;box-shadow:0 0 0 .8px #ffcdff"></i><span class="nm" style="left:30.3px">SNr</span><span class="v1">0.0000</span><i class="bl g" style="width:0.0px"></i><i class="br g" style="width:6.9px"></i><span class="v2">0.0072</span></div>
<div class="r" style="top:545.6px;background:#fff"><i class="gd"></i><i class="sq" style="left:15.2px;background:#ff90ff;box-shadow:0 0 0 .8px #ffcdff"></i><span class="nm" style="left:30.3px">MRN</span><span class="v1">0.0001</span><i class="bl g" style="width:0.8px"></i><i class="br g" style="width:6.2px"></i><span class="v2">0.0058</span></div>
<i class="abs" style="left:4.6px;top:0;width:1px;height:100%;background:rgba(0,0,0,.05);display:block"></i>
</div>
<div class="abs" style="left:741.4px;top:44.4px;width:12.1px;height:550px;background:#f1f1f1"></div>
<div class="abs" style="left:742px;top:155.8px;width:10.2px;height:326.8px;background:#c1c1c1"></div>
<svg class="abs" style="left:743.4px;top:50px" width="8" height="5" viewBox="0 0 8 5"><path d="M.6 4.4 L7.4 4.4 L4 .8Z" fill="#444"/></svg>
<svg class="abs" style="left:743.4px;top:584.4px" width="8" height="5" viewBox="0 0 8 5"><path d="M.6 .6 L7.4 .6 L4 4.2Z" fill="#444"/></svg>
<div class="abs" style="left:264.6px;top:594.3px;width:476.8px;height:13.1px;background:#f1f1f1"></div>
<div class="abs" style="left:741.4px;top:594.3px;width:12.1px;height:13.1px;background:#dcdcdc"></div>
<svg class="abs" style="left:268.6px;top:597.2px" width="5" height="8" viewBox="0 0 5 8"><path d="M4.2 .8 L4.2 7.2 L.8 4Z" fill="#a8a8a8"/></svg>
<svg class="abs" style="left:731.6px;top:597.2px" width="5" height="8" viewBox="0 0 5 8"><path d="M.8 .8 L.8 7.2 L4.2 4Z" fill="#a8a8a8"/></svg>
<div class="abs" style="left:264px;top:607.4px;width:489.5px;height:1px;background:#e2e2e2"></div>

<div class="abs" style="left:264px;top:44px;width:1px;height:563.4px;background:#d6d6d6"></div>
<div class="abs" style="left:275.4px;top:477.2px;width:466px;height:29.8px;border:1.5px solid #b01414"></div>
<div class="abs" style="left:264px;top:612.3px;width:489.5px;text-align:center;font-size:9.7px;color:#333">This data is also available as <span style="color:#2470b4">XML</span>.</div>
</body></html>
